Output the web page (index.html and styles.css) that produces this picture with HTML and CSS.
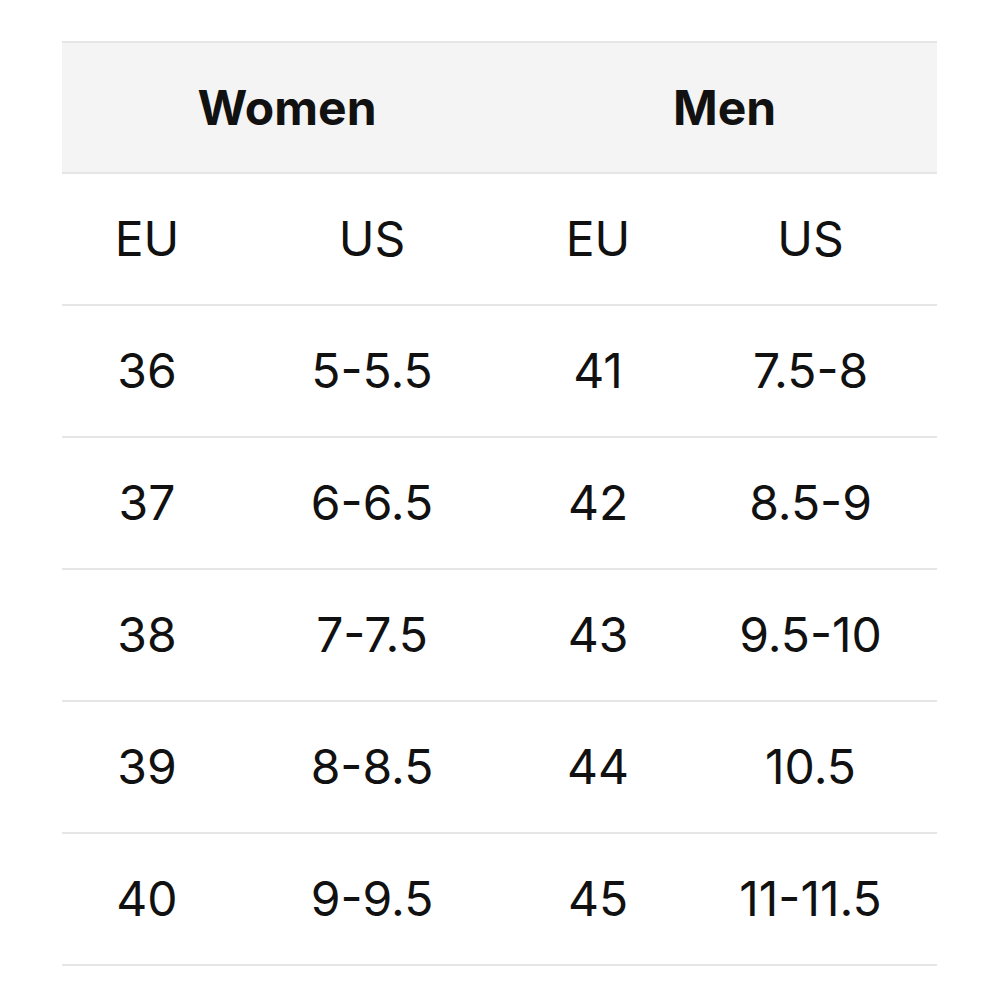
FILE: index.html
```html
<!DOCTYPE html>
<html lang="en">
<head>
<meta charset="utf-8">
<title>Size chart</title>
<link rel="stylesheet" href="styles.css">
</head>
<body>
<table class="size-table">
  <colgroup>
    <col class="c1"><col class="c2"><col class="c3"><col class="c4">
  </colgroup>
  <thead>
    <tr class="group-row">
      <th colspan="2">Women</th>
      <th colspan="2">Men</th>
    </tr>
  </thead>
  <tbody>
    <tr><td>EU</td><td>US</td><td>EU</td><td>US</td></tr>
    <tr><td>36</td><td>5-5.5</td><td>41</td><td>7.5-8</td></tr>
    <tr><td>37</td><td>6-6.5</td><td>42</td><td>8.5-9</td></tr>
    <tr><td>38</td><td>7-7.5</td><td>43</td><td>9.5-10</td></tr>
    <tr><td>39</td><td>8-8.5</td><td>44</td><td>10.5</td></tr>
    <tr><td>40</td><td>9-9.5</td><td>45</td><td>11-11.5</td></tr>
  </tbody>
</table>
</body>
</html>
```
FILE: styles.css
```css
html, body {
  margin: 0;
  padding: 0;
  background: #ffffff;
}
body {
  padding: 41px 0 0 62px;
  font-family: "Inter", "Lato", sans-serif;
  color: #111111;
}
.size-table {
  width: 875px;
  table-layout: fixed;
  border-collapse: collapse;
  border-top: 2px solid #e6e6e6;
}
.c1 { width: 170px; }
.c2 { width: 280px; }
.c3 { width: 172px; }
.c4 { width: 253px; }
.size-table th,
.size-table td {
  text-align: center;
  vertical-align: middle;
  padding: 0;
  border-bottom: 2px solid #e6e6e6;
  height: 130px;
  font-size: 48px;
  line-height: 1;
}
.group-row th {
  background: #f4f4f4;
  font-weight: 700;
  height: 129px;
}
.size-table td {
  font-weight: 400;
}
```
